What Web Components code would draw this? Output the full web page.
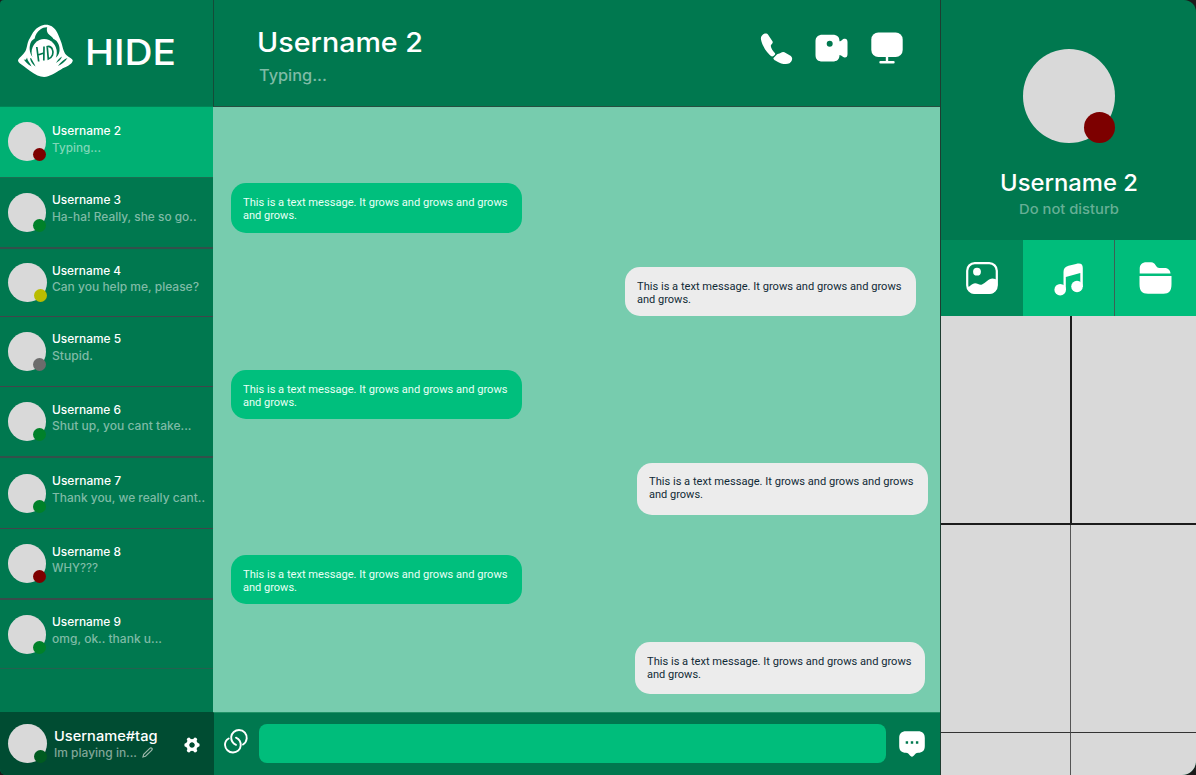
<!DOCTYPE html>
<html lang="en"><head><meta charset="utf-8"><title>Hide</title>
<style>
html,body{margin:0;height:100%;background:#1b1b1b;overflow:hidden}
body{font-family:Inter,"Open Sans",sans-serif;color:#fff}
</style></head><body>
<hide-app></hide-app>
<script>
const define = (name, html, init) => customElements.define(name, class extends HTMLElement {
  connectedCallback() {
    if (this.shadowRoot) return;
    const t = document.createElement('template');
    t.innerHTML = typeof html === 'function' ? html(n => this.getAttribute(n) ?? '') : html;
    this.attachShadow({mode: 'open'}).append(t.content.cloneNode(true));
    if (init) init(this);
  }
});

/* One line of text widened to a given width */
define('tracked-text', a => `<style>
:host{display:block;white-space:nowrap;height:${a('lh')}px;width:${a('w')}px}
span{display:inline-block;transform-origin:0 0;font-size:${a('size')}px;line-height:${a('lh')}px;font-weight:${a('weight') || 500}}
</style><span>${a('text')}</span>`, el => {
  const s = el.shadowRoot.querySelector('span');
  s.style.transform = `scaleX(${(el.getAttribute('w') / s.getBoundingClientRect().width).toFixed(4)})`;
});

define('status-avatar', a => `<style>
:host{display:block;position:relative;flex:none;width:${a('w')}px;height:${a('h')}px;border-radius:50%;background:#d9d9d9}
i{position:absolute;right:0;bottom:0;width:${a('dot')}px;height:${a('dot')}px;border-radius:50%;background:${a('color')}}
</style><i></i>`);

const icons = {
  logo: [56, 54, `<path fill="#fff" d="M26.500 .8C31 0 35.500 2.500 38 6.500C40 9.500 41.500 14 43.500 19C44.500 22.500 45.500 27 47 29.500C49.500 33 54.500 34.500 54.800 36.500C54.500 39.500 50 42 46.500 43.500C42 45.500 37 50 30 52.300C27 53.300 23 53 19.500 51.500C14 49 9 44.500 5.500 42C2.500 40 .2 38.500 0 36.500C.5 34 5 31.500 7.500 27C9.500 23 9 18 12 14C14.500 10 16.500 3 26.500 .8Z"/>
<path fill="#00784f" d="M14.500 33C11 28.500 11 22 13 18C14 16 15.200 15.800 16.700 14.500C17 11 19.500 7.500 22.300 5.500C24.500 4 26.500 3.200 29.200 3.300C28.500 5.500 28.800 7.500 30 9.500C31.500 11.500 34 12.500 35.500 15C38.500 16 41 19.500 41.500 24C42 28 40.500 31.500 38 33.500Z"/>
<ellipse cx="26.200" cy="28.500" rx="12.600" ry="13.500" fill="#fff"/>
<path fill="#00784f" d="M5.200 34C7 38 9.500 40 13.500 42.500C12 39 9.500 37 9 33.500C8 37 6 36 5.200 34ZM12 34.500C13 38.500 15 40.500 17.500 42.500C16 39 14.500 37 13 34ZM40 42C43 40.500 47 38 49.500 34C46.500 35 43 37.500 40 42ZM38 39C41 37 43 35.500 44 32.500C41.500 34 39.500 36 38 39Z"/>
<path fill="none" stroke="#00784f" stroke-width="1.700" d="M18.800 23L20.700 37.500M26 22.500L25.800 36.500M19.800 31L26 29M29.200 22.500L30.300 35C34.500 33.500 36 29 34.400 25.500C33.300 22.500 31 22 28.500 22.700"/>`],
  phone: [34, 34, `<path fill="#fff" d="M2 3.500C4 1.200 6.800.9 8.300 3L12.600 9.500C13.500 11.500 10.500 12.500 10.800 14C11 16.500 13 19 15 21.200C15.600 22 14.500 23.500 13.500 24C12 25 10.700 24 9.500 22.800C5 18.500 2 12.500 1 7.500C.7 6 1 4.500 2 3.500ZM13.500 26L16.600 22.700C18 21.300 19 22 20.500 21C22.500 19.500 24 19.500 25.700 21L30.500 23.700C33.500 26 32 29.500 29.500 31.300C26.500 33 20.500 31.800 17 29.500C15.500 28.500 12.800 27.300 13.500 26Z"/>`],
  video: [33, 28, `<path fill="#fff" fill-rule="evenodd" d="M7.500.7H17.500C22.500.7 24.500 3 24.500 7.300C27 7 27 4.700 30 4.700C31.800 4.700 32.500 6 32.500 8V20C32.500 22.500 31.500 23.700 29.500 23.500C27.500 23.300 27 21.300 24.500 21C24.500 25.500 22 27.500 17.500 27.500H7.500C3 27.500.5 25.500.5 21V7.500C.5 3 3 .7 7.500.7ZM14.700 6.800A3 3 0 1 0 14.700 12.800A3 3 0 1 0 14.700 6.800Z"/>`],
  screen: [32, 32, `<rect x=".3" y=".5" width="31.400" height="24.500" rx="7" fill="#fff"/><path stroke="#fff" stroke-width="2.400" stroke-linecap="round" d="M16 25V30M9.500 30.300H22.500"/>`],
  image: [32, 32, `<rect x="1.200" y="1.200" width="29.600" height="29.600" rx="7.500" fill="none" stroke="#fff" stroke-width="2.200"/><circle cx="11" cy="9.700" r="3.900" fill="#fff"/><path fill="#fff" d="M1.500 25.500C4.500 24 6.500 21.300 9 21.300C12 21.300 13.500 23.500 16 22.500C19.500 21 22.500 16.500 26.500 16.500C28.500 16.500 30 17.500 31 18V23C31 29 28 31.500 23 31.500H9C4.500 31.500 2.500 29 1.500 25.500Z"/>`],
  music: [30, 33, `<path fill="#fff" d="M9.500 9C9.500 5.500 11 3.800 14.500 2.800L22 .9C26.500 -.2 28.800 .8 28.800 5V24H26.300V10L11.800 14V27H9.500Z"/><circle cx="6.200" cy="26.700" r="5.800" fill="#fff"/><circle cx="23" cy="23.500" r="5.800" fill="#fff"/>`],
  folder: [33, 32, `<path fill="#fff" d="M.7 11.500V7C.7 2.500 3 .2 7.500 .2H12C17 .2 16.500 6 20.500 6H25C29 6 31.300 8 31.500 11.500ZM.5 14H32.500V22C32.500 29 30 31.700 24.500 31.700H9C3 31.700 .5 29 .5 22Z"/>`],
  gear: [16, 16, `<circle cx="8" cy="8" r="4.300" fill="none" stroke="#fff" stroke-width="3.600"/><path stroke="#fff" stroke-width="3.800" stroke-linecap="round" d="M4.800 2.500L5.500 3.500M11.200 2.500L10.500 3.500M4.800 13.500L5.500 12.500M11.200 13.500L10.500 12.500M2.200 8H3M13 8H13.800"/><circle cx="8" cy="8" r="2.500" fill="#004c32"/>`],
  pencil: [11, 11, `<path fill="none" stroke="#9bb8aa" stroke-width="1.200" d="M1 10L1.700 7.300L7.800 1.400C8.500.7 9.300.7 9.900 1.300S10.200 2.700 9.600 3.300L3.500 9.300Z"/>`],
  link: [24, 25, `<path fill="none" stroke="#fff" stroke-width="1.900" stroke-linecap="round" d="M12 15.800C9 14.500 7 11.500 7.200 7.800C7.600 4 11 1 15 1C20 1 23 5 22.700 9.500C22.400 12 21.500 14 19 15.500M4.700 9.500C2 11 1 13.500 1 16C1.300 20 4.500 23.500 9 23.500C13 23.300 16.300 20.800 16.700 16.700C16.900 13 15 10 12 8.700"/>`],
  chat: [26, 26, `<path fill="#fff" d="M7 .2H19C23.500.2 25.800 2.500 25.800 7V15C25.800 19.500 23.500 21.800 19 21.800C16 21.800 15 25.700 13 25.700S10 21.800 7 21.800C2.500 21.800.2 19.500.2 15V7C.2 2.500 2.500.2 7 .2Z"/><path fill="#00784f" d="M6.700 10.300h2.400v2.400h-2.400zM11.800 10.300h2.400v2.400h-2.400zM16.900 10.300h2.400v2.400h-2.400z"/>`]
};
define('app-icon', a => { const [w, h, p] = icons[a('name')]; return `<style>:host{display:block;flex:none;width:${w}px;height:${h}px}svg{display:block}</style><svg width="${w}" height="${h}" viewBox="0 0 ${w} ${h}">${p}</svg>`; });

define('contact-row', a => `<style>
:host{display:flex;box-sizing:border-box;flex:none;height:${a('h')}px;padding-left:${a('x') || 7.5}px;background:${a('active') ? '#00b073' : 'none'};border-bottom:${a('line')}}
status-avatar{margin-top:${a('top')}px}
div{margin:${a('ttop') - 3.7}px 0 0 ${52.3 - 38.5 - (a('x') || 7.5)}px}
.s{color:${a('active') ? '#7fd7b8' : '#7fbba6'};margin-top:.7px}
</style><status-avatar w="38.5" h="39" dot="13" color="${a('color')}"></status-avatar>
<div><tracked-text text="${a('name')}" w="69" size="11.6" lh="16" weight="500"></tracked-text>
<tracked-text class="s" text="${a('msg')}" w="${a('w')}" size="11.5" lh="16"></tracked-text></div>`);

define('chat-bubble', a => `<style>
:host{display:block;box-sizing:border-box;flex:none;width:290.5px;height:${a('h')}px;margin:${a('gap')}px 0 0 ${a('x')}px;border-radius:15px;padding:12.3px 0 0 12px;font:400 11.3px/13px Roboto,sans-serif;background:${a('mine') ? '#ececec' : '#00bf7d'};color:${a('mine') ? '#102a36' : '#e9fff6'}}
</style><tracked-text weight="400" size="11.3" lh="13" w="264.5" text="This is a text message. It grows and grows and grows"></tracked-text><tracked-text weight="400" size="11.3" lh="13" w="54" text="and grows."></tracked-text>`);

define('side-bar', `<style>
:host{display:flex;flex-direction:column;background:#00784f;min-width:0}
header{display:flex;height:106px;border-bottom:1px solid #008556;flex:none}
header app-icon{margin:24px 0 0 18px}
header tracked-text{margin:31px 0 0 10.500px}
footer{display:flex;margin-top:auto;height:63px;background:#004c32;flex:none}
footer status-avatar{margin:12px 0 0 8px}
footer>div{margin:12.500px 0 0 7.500px}
.m{display:flex;gap:5px;color:#80a698}
.m tracked-text{margin-top:-1px}
.m app-icon{margin-top:5px}
footer>app-icon{margin:25px 0 0 26px}
</style>
<header><app-icon name="logo"></app-icon><tracked-text text="HIDE" w="91" size="35.500" lh="44" weight="500"></tracked-text></header>
<contact-row h="71" top="15" ttop="16" name="Username 2" msg="Typing..." w="49" color="#7d0000" active="1" line="1px solid #1b6e51"></contact-row>
<contact-row h="71" top="15" ttop="14" name="Username 3" msg="Ha-ha! Really, she so go.." w="144.500" color="#008129" line="2px solid #34504b"></contact-row>
<contact-row h="68" x="8" top="14.3" ttop="13.500" name="Username 4" msg="Can you help me, please?" w="147" color="#b9bc00" line="1px solid #42454b"></contact-row>
<contact-row h="70" top="14.500" ttop="14" name="Username 5" msg="Stupid." w="41" color="#6c6c6c" line="1px solid #42454b"></contact-row>
<contact-row h="71" top="15" ttop="14.500" name="Username 6" msg="Shut up, you cant take..." w="139.500" color="#008129" line="2px solid #34504b"></contact-row>
<contact-row h="71" top="15.500" ttop="15" name="Username 7" msg="Thank you, we really cant.." w="153" color="#008129" line="1px solid #42454b"></contact-row>
<contact-row h="71" top="15" ttop="14.500" name="Username 8" msg="WHY???" w="46" color="#7d0000" line="2px solid #3a4b4b"></contact-row>
<contact-row h="69" top="14.500" ttop="14" name="Username 9" msg="omg, ok.. thank u..." w="110" color="#008129" line="1px solid #25604f"></contact-row>
<footer><status-avatar w="38.500" h="39" dot="13" color="#005b20"></status-avatar>
<div><tracked-text text="Username#tag" w="103.500" size="13.600" lh="17" weight="500"></tracked-text>
<div class="m"><tracked-text text="Im playing in..." w="83" size="11.700" lh="16"></tracked-text><app-icon name="pencil"></app-icon></div></div>
<app-icon name="gear"></app-icon></footer>`);

define('chat-pane', `<style>
:host{display:flex;flex-direction:column;min-width:0;background:#77ccae}
header{display:flex;box-sizing:border-box;height:107px;background:#00784f;border-left:1px solid #154b38;border-bottom:1px solid #254f40;flex:none}
header>div{margin:26px 0 0 43px;width:503px}
.t{color:#7fbba6;margin-top:5px;margin-left:2px}
header app-icon{margin-top:32px}
header .v{margin:34px 0 0 21px}header .s{margin:32px 0 0 23px}
section{display:flex;flex-direction:column;flex:1;min-height:0}
footer{display:flex;box-sizing:border-box;height:63px;background:#00784f;border-left:1px solid #004c32;border-top:1px solid #209367;flex:none}
.l{margin:16px 0 0 10px}
b{width:627px;height:39px;margin:11px 13px 0 11px;border-radius:8px;background:#00bd7b}
.c{margin-top:18px}
</style>
<header><div><tracked-text text="Username 2" w="166" size="27" lh="34"></tracked-text><tracked-text class="t" text="Typing..." w="68" size="15.800" lh="18"></tracked-text></div>
<app-icon name="phone"></app-icon><app-icon class="v" name="video"></app-icon><app-icon class="s" name="screen"></app-icon></header>
<section>
<chat-bubble x="18" gap="76.300" h="49.500"></chat-bubble>
<chat-bubble mine="1" x="412" gap="34.500" h="48.500"></chat-bubble>
<chat-bubble x="18" gap="54.700" h="49"></chat-bubble>
<chat-bubble mine="1" x="424" gap="43.500" h="52"></chat-bubble>
<chat-bubble x="18" gap="40.500" h="49"></chat-bubble>
<chat-bubble mine="1" x="421.500" gap="38" h="52"></chat-bubble></section>
<footer><app-icon class="l" name="link"></app-icon><b></b><app-icon class="c" name="chat"></app-icon></footer>`);

define('profile-pane', `<style>
:host{display:flex;flex-direction:column;box-sizing:border-box;border-left:1px solid #1e3d31;background:#00784f;border-radius:0 12px 14px 0;overflow:hidden}
.p{display:flex;flex-direction:column;align-items:center;height:240px;flex:none}
.p status-avatar{margin-top:48.500px}
.p .n{margin-top:25px}.p .d{margin-top:1px;color:#66af95}
nav{display:grid;grid-template-columns:82px 91px 1fr;height:76px;flex:none}
nav div{background:#00bd7b}nav div:first-child{background:#008a5a}nav div+div+div{border-left:1px solid #3b6154}
nav app-icon{margin:22px 0 0 25px}nav div+div app-icon{margin:23px 0 0 31px}nav div+div+div app-icon{margin:22px 0 0 24px}
.g{display:grid;grid-template-columns:131px 1fr;grid-template-rows:209px 208px 1fr;flex:1;background:#d9d9d9}
.g div{border-bottom:1px solid #333}
.g div:nth-child(odd){border-right:1px solid #555;margin-right:1px}
.g div:nth-child(-n+2){border-bottom:2px solid #1c1c1c}.g div:first-child{border-right:2px solid #1c1c1c;margin-right:0}.g div:nth-child(n+5){border-bottom:0}
.g div:nth-child(4){margin-left:-1px}
</style><div class="p"><status-avatar w="92" h="94" dot="31" color="#7d0000"></status-avatar>
<tracked-text class="n" text="Username 2" w="138" size="22.700" lh="29"></tracked-text><tracked-text class="d" text="Do not disturb" w="100" size="13.700" lh="18"></tracked-text></div>
<nav><div><app-icon name="image"></app-icon></div><div><app-icon name="music"></app-icon></div><div><app-icon name="folder"></app-icon></div></nav>
<div class="g"><div></div><div></div><div></div><div></div><div></div><div></div></div>`);

define('hide-app', `<style>
:host{display:grid;grid-template-columns:213px 727px 256px;width:1196px;height:775px;overflow:hidden}
side-bar{border-radius:4px 0 0 6px;overflow:hidden}
</style><side-bar></side-bar><chat-pane></chat-pane><profile-pane></profile-pane>`);
</script></body></html>
